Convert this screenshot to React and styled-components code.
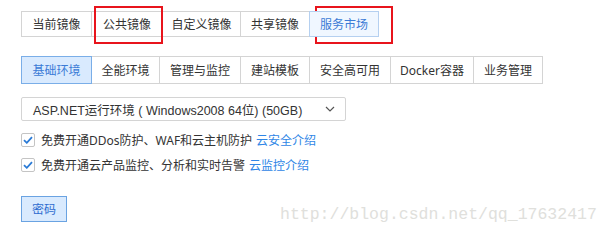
import React from "react";
import styled, { createGlobalStyle } from "styled-components";

const Global = createGlobalStyle`
  html, body { margin: 0; padding: 0; background: #fff; }
  body { font-family: "Noto Sans", "Noto Sans CJK SC", sans-serif; }
`;

const Page = styled.div`
  position: relative;
  width: 612px;
  height: 237px;
  padding: 11px 0 0 21px;
  box-sizing: border-box;
  background: #fff;
  font-size: 12px;
  color: #333;
`;

const TabGroup = styled.div`
  display: flex;
  margin-top: ${(p) => p.$mt || 0}px;
`;

const Tab = styled.div`
  height: ${(p) => p.$h}px;
  box-sizing: border-box;
  display: flex;
  align-items: center;
  justify-content: center;
  border: 1px solid ${(p) => (p.$active ? p.$activeBorder : "#d4d4d4")};
  margin-left: ${(p) => (p.$first ? 0 : -1)}px;
  position: relative;
  z-index: ${(p) => (p.$active ? 1 : 0)};
  background: ${(p) => (p.$active ? p.$activeBg : "#fff")};
  color: ${(p) => (p.$active ? "#3b7bd6" : "#333")};
  font-size: 12px;
  white-space: nowrap;
  width: ${(p) => p.$w}px;
`;

const Highlight = styled.div`
  position: absolute;
  border: 2px solid #e8141c;
  box-sizing: border-box;
  pointer-events: none;
`;

const Select = styled.div`
  margin-top: 13px;
  width: 325px;
  height: 24px;
  box-sizing: border-box;
  border: 1px solid #d4d4d4;
  border-radius: 2px;
  display: flex;
  align-items: center;
  justify-content: space-between;
  padding: 0 10px 0 11px;
  font-family: "Liberation Sans", "Noto Sans CJK SC", sans-serif;
  font-size: 12.5px;
  color: #333;
`;

const CheckList = styled.div`
  margin-top: 6px;
  display: flex;
  flex-direction: column;
`;

const CheckRow = styled.label`
  height: 25px;
  display: flex;
  align-items: center;
  font-size: 12px;
  color: #333;
  white-space: nowrap;
`;

const Box = styled.span`
  width: 14px;
  height: 14px;
  box-sizing: border-box;
  border: 1px solid #c4c4c4;
  border-radius: 2px;
  background: #fff;
  display: inline-flex;
  align-items: center;
  justify-content: center;
  margin-right: 6px;
`;

const Link = styled.span`
  color: #2f86e6;
  margin-left: 4px;
`;

const Button = styled.div`
  margin-top: 19px;
  width: 46px;
  height: 26px;
  box-sizing: border-box;
  border: 1px solid #6aa3e2;
  background: #d9eafe;
  color: #2e6bcf;
  display: flex;
  align-items: center;
  justify-content: center;
  font-size: 12px;
`;

const Watermark = styled.div`
  position: absolute;
  left: 280px;
  top: 205px;
  font-family: "Liberation Mono", monospace;
  font-size: 16.5px;
  color: #e0e0dc;
  white-space: nowrap;
`;

const Check = () => (
  <svg width="10" height="8" viewBox="0 0 10 8">
    <path d="M1 4.2 L3.8 6.8 L9 1.2" fill="none" stroke="#2b7bd6" strokeWidth="1.8" />
  </svg>
);

const Chevron = () => (
  <svg width="10" height="6" viewBox="0 0 10 6">
    <path d="M1 1 L5 5 L9 1" fill="none" stroke="#555" strokeWidth="1.2" />
  </svg>
);

const imageTabs = [
  { label: "当前镜像", w: 71 },
  { label: "公共镜像", w: 72 },
  { label: "自定义镜像", w: 79 },
  { label: "共享镜像", w: 70 },
  { label: "服务市场", w: 70, active: true },
];

const envTabs = [
  { label: "基础环境", w: 71, active: true },
  { label: "全能环境", w: 69 },
  { label: "管理与监控", w: 82 },
  { label: "建站模板", w: 70 },
  { label: "安全高可用", w: 82 },
  { label: "Docker容器", w: 84 },
  { label: "业务管理", w: 70 },
];

export default function App() {
  return (
    <>
      <Global />
      <Page>
        <TabGroup>
          {imageTabs.map((t, i) => (
            <Tab
              key={t.label}
              $h={26}
              $w={t.w}
              $first={i === 0}
              $active={t.active}
              $activeBg="#f0f7ff"
              $activeBorder="#b5d0f0"
            >
              {t.label}
            </Tab>
          ))}
        </TabGroup>
        <TabGroup $mt={19}>
          {envTabs.map((t, i) => (
            <Tab
              key={t.label}
              $h={28}
              $w={t.w}
              $first={i === 0}
              $active={t.active}
              $activeBg="#d9eafe"
              $activeBorder="#7aaee8"
            >
              {t.label}
            </Tab>
          ))}
        </TabGroup>
        <Select>
          <span>ASP.NET运行环境 ( Windows2008 64位) (50GB)</span>
          <Chevron />
        </Select>
        <CheckList>
          <CheckRow>
            <Box><Check /></Box>
            免费开通DDos防护、WAF和云主机防护<Link>云安全介绍</Link>
          </CheckRow>
          <CheckRow>
            <Box><Check /></Box>
            免费开通云产品监控、分析和实时告警<Link>云监控介绍</Link>
          </CheckRow>
        </CheckList>
        <Button>密码</Button>
        <Highlight style={{ left: 94, top: 6, width: 69, height: 38 }} />
        <Highlight style={{ left: 315, top: 6, width: 78, height: 38 }} />
        <Watermark>http://blog.csdn.net/qq_17632417</Watermark>
      </Page>
    </>
  );
}
